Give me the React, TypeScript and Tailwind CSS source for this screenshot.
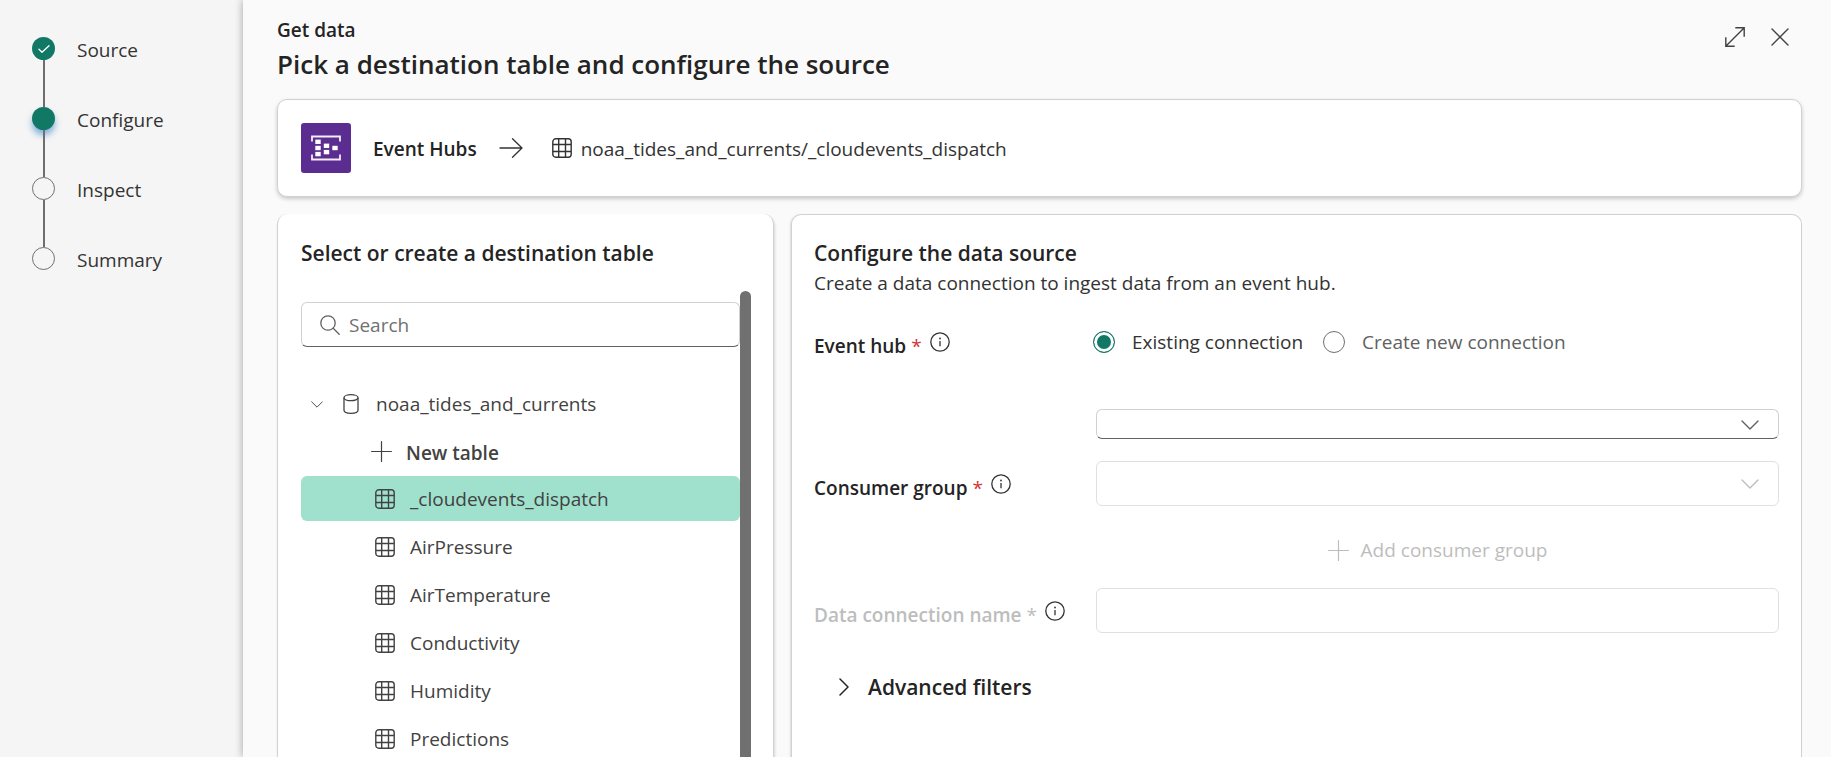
import React from "react";

type IconProps = { className?: string };

const TableIcon = ({ className = "" }: IconProps) => (
  <svg className={"size-5 shrink-0 " + className} viewBox="0 0 20 20" fill="none" stroke="currentColor" strokeWidth="1.4" aria-hidden="true">
    <rect x="0.8" y="0.8" width="18.4" height="18.4" rx="3" />
    <path d="M6.7 1v18M13.5 1v18M1 6.5h18M1 13.5h18" />
  </svg>
);

const InfoIcon = () => (
  <svg className="size-5 shrink-0 text-[#333333]" viewBox="0 0 20 20" fill="none" stroke="currentColor" strokeWidth="1.3" aria-hidden="true">
    <circle cx="10" cy="10" r="9.2" />
    <path d="M10 9v5.2" />
    <circle cx="10" cy="6.5" r="0.9" fill="currentColor" stroke="none" />
  </svg>
);

const PlusIcon = () => (
  <svg className="size-[21px] shrink-0" viewBox="0 0 21 21" fill="none" stroke="currentColor" strokeWidth="1.2" strokeLinecap="round" aria-hidden="true">
    <path d="M10.5 0.6v19.8M0.6 10.5h19.8" />
  </svg>
);

const ChevronDown = ({ className = "" }: IconProps) => (
  <svg className={className} viewBox="0 0 18 10" fill="none" stroke="currentColor" strokeWidth="1.4" strokeLinecap="round" strokeLinejoin="round" aria-hidden="true">
    <path d="M1 1l8 8 8-8" />
  </svg>
);

const EventHubsLogo = () => (
  <svg className="size-[50px] shrink-0" viewBox="0 0 50 50" aria-hidden="true">
    <rect width="50" height="50" rx="3" fill="#5c2d91" />
    <path d="M11 18.5v-5h28v5M11 31.5v5h28v-5" fill="none" stroke="#f3eef8" strokeWidth="1.8" />
    <g fill="#ffffff">
      <rect x="14.3" y="16.6" width="5.4" height="4.4" />
      <rect x="14.3" y="22.8" width="5.4" height="4.4" />
      <rect x="14.3" y="28.9" width="5.4" height="4.4" />
      <rect x="22.8" y="20.6" width="5.4" height="4.4" />
      <rect x="22.8" y="26.9" width="5.4" height="4.4" />
      <rect x="31.3" y="22.8" width="5.4" height="4.4" />
    </g>
  </svg>
);

const steps = [
  { name: "Source", state: "done" },
  { name: "Configure", state: "current" },
  { name: "Inspect", state: "todo" },
  { name: "Summary", state: "todo" },
];

const tables = ["_cloudevents_dispatch", "AirPressure", "AirTemperature", "Conductivity", "Humidity", "Predictions"];

function Marker({ state }: { state: string }) {
  if (state === "done") {
    return (
      <span className="flex size-[23px] items-center justify-center rounded-full bg-[#117865] text-white">
        <svg className="h-2 w-3" viewBox="0 0 12 8" fill="none" stroke="currentColor" strokeWidth="1.3" strokeLinecap="round" strokeLinejoin="round" aria-hidden="true">
          <path d="M1 4.3l3 3L11 0.8" />
        </svg>
      </span>
    );
  }
  if (state === "current") {
    return <span className="size-[23px] rounded-full bg-[#117865] shadow-[0_5px_6px_#0f6cbd80]" />;
  }
  return <span className="size-[23px] rounded-full border border-[#707070]" />;
}

function Steps() {
  return (
    <nav aria-label="Progress" className="w-[243px] shrink-0 bg-[#f5f5f5] px-8 pt-[37px]">
      <ol>
        {steps.map((step, i) => (
          <li key={step.name} className="flex h-[70px] gap-[22px]">
            <div className="flex flex-col items-center">
              <Marker state={step.state} />
              {i < steps.length - 1 && <span className="w-0.5 grow bg-[#6e6e6e]" />}
            </div>
            <span className="leading-[26px] text-[#333333]">{step.name}</span>
          </li>
        ))}
      </ol>
    </nav>
  );
}

function DestinationPanel() {
  return (
    <section className="flex min-h-0 flex-col rounded-t-[10px] border-x border-[#d1d1d1] bg-white pt-6 pr-[22px] pl-[23px] shadow-[1px_2px_3px_#00000024]">
      <h2 className="text-[21px] leading-[30px] font-semibold">Select or create a destination table</h2>
      <div className="mt-[23px] flex min-h-0 grow">
        <div className="min-w-0 grow overflow-hidden pt-[11px]">
          <label className="flex h-[45px] items-center gap-[9px] rounded-md border border-[#d1d1d1] border-b-[#616161] px-[18px] text-[#616161]">
            <svg className="size-5 shrink-0" viewBox="0 0 20 20" fill="none" stroke="currentColor" strokeWidth="1.3" strokeLinecap="round" aria-hidden="true">
              <circle cx="8" cy="8" r="7.2" />
              <path d="M13.2 13.2l6 6" />
            </svg>
            <input type="text" aria-label="Search" placeholder="Search" className="min-w-0 grow bg-transparent outline-none placeholder:text-[#707070]" />
          </label>
          <div className="mt-[34px] text-[#424242]">
            <button type="button" aria-expanded="true" className="flex h-[46px] w-full items-center pl-[10px] text-left">
              <ChevronDown className="h-[7px] w-3" />
              <svg className="ml-5 h-5 w-4" viewBox="0 0 16 20" fill="none" stroke="currentColor" strokeWidth="1.3" aria-hidden="true">
                <ellipse cx="8" cy="3.7" rx="7" ry="3" />
                <path d="M1 3.7v12.6c0 1.7 3.1 3 7 3s7-1.3 7-3V3.7" />
              </svg>
              <span className="ml-[17px]">noaa_tides_and_currents</span>
            </button>
            <button type="button" className="flex h-[49px] w-full items-center gap-3.5 pl-[70px] text-left font-semibold">
              <PlusIcon />
              <span className="pt-0.5">New table</span>
            </button>
            <ul className="flex flex-col gap-[3px]">
              {tables.map((name, i) => (
                <li key={name}>
                  <button
                    type="button"
                    aria-pressed={i === 0}
                    className={
                      "flex h-[45px] w-full items-center gap-[15px] rounded-md pl-[74px] text-left " + (i === 0 ? "bg-[#9fe1cd]" : "bg-white")
                    }
                  >
                    <TableIcon />
                    {name}
                  </button>
                </li>
              ))}
            </ul>
          </div>
        </div>
        <div className="w-[11px] shrink-0 rounded-t-md bg-[#707070]" />
      </div>
    </section>
  );
}

function FieldLabel({ id, text, disabled = false }: { id: string; text: string; disabled?: boolean }) {
  return (
    <div className="flex items-center">
      <label htmlFor={id} className={"pt-2 font-semibold " + (disabled ? "text-[#bdbdbd]" : "")}>
        {text} <span className={"font-normal " + (disabled ? "" : "text-[#d13438]")}>*</span>
      </label>
      <button type="button" aria-label={"About " + text} className="ml-2">
        <InfoIcon />
      </button>
    </div>
  );
}

function SourcePanel() {
  return (
    <section className="min-h-0 overflow-hidden rounded-t-[10px] border border-b-0 border-[#d1d1d1] bg-white pt-[23px] pr-[22px] pl-[22px] shadow-[-1px_1px_2px_#0000001f]">
      <h2 className="text-[21px] leading-[30px] font-semibold">Configure the data source</h2>
      <p className="leading-[30px] text-[#333333]">Create a data connection to ingest data from an event hub.</p>
      <div className="mt-[28px] grid grid-cols-[282px_minmax(0,1fr)]">
        <div className="h-[83px]">
          <div className="flex h-[31px] items-center">
            <FieldLabel id="event-hub" text="Event hub" />
          </div>
        </div>
        <div className="-ml-[3px] flex h-[31px] items-center">
          <label className="flex items-center gap-[17px] text-[#333333]">
            <input
              type="radio"
              name="connection"
              defaultChecked
              className="size-[22px] appearance-none rounded-full border border-[#707070] checked:border-[#117865] checked:bg-[#117865] checked:shadow-[inset_0_0_0_3px_#ffffff]"
            />
            Existing connection
          </label>
          <label className="ml-5 flex items-center gap-[17px] text-[#616161]">
            <input
              type="radio"
              name="connection"
              className="size-[22px] appearance-none rounded-full border border-[#707070] checked:border-[#117865] checked:bg-[#117865] checked:shadow-[inset_0_0_0_3px_#ffffff]"
            />
            Create new connection
          </label>
        </div>

        <div className="relative col-start-2 h-[52px]">
          <select id="event-hub" className="block h-[30px] w-full appearance-none rounded-md border border-[#d1d1d1] border-b-[#616161] bg-white px-4" />
          <ChevronDown className="pointer-events-none absolute top-[11px] right-5 h-[10px] w-[18px] text-[#616161]" />
        </div>

        <FieldLabel id="consumer-group" text="Consumer group" />
        <div className="relative">
          <select id="consumer-group" disabled className="block h-[45px] w-full appearance-none rounded-md border border-[#e0e0e0] bg-white px-4" />
          <ChevronDown className="pointer-events-none absolute top-[18px] right-5 h-[10px] w-[18px] text-[#bdbdbd]" />
        </div>

        <button type="button" disabled className="col-start-2 flex h-[82px] items-center justify-center gap-3 pt-1.5 text-[#bdbdbd]">
          <PlusIcon />
          Add consumer group
        </button>

        <FieldLabel id="connection-name" text="Data connection name" disabled />
        <input id="connection-name" type="text" disabled className="h-[45px] w-full rounded-md border border-[#e0e0e0] bg-white px-4" />
      </div>
      <button type="button" aria-expanded="false" className="mt-[39px] flex items-center gap-[19px] pl-[25px] text-[21px] leading-[30px] font-semibold">
        <svg className="h-[18px] w-[10px]" viewBox="0 0 10 18" fill="none" stroke="currentColor" strokeWidth="1.5" strokeLinecap="round" strokeLinejoin="round" aria-hidden="true">
          <path d="M1 1l8 8-8 8" />
        </svg>
        Advanced filters
      </button>
    </section>
  );
}

export default function App() {
  return (
    <div className="flex h-screen overflow-hidden bg-[#f5f5f5] font-['Open_Sans','Noto_Sans',sans-serif] text-[19px] leading-[26px] text-[#242424]">
      <Steps />
      <main className="flex min-w-0 grow flex-col bg-[#fafafa] pr-[29px] pl-[34px] shadow-[0_0_8px_#00000059]">
        <header className="flex items-start justify-between pt-[17px]">
          <div>
            <p className="leading-[26px] font-semibold">Get data</p>
            <h1 className="text-[26px] leading-[42px] font-semibold">Pick a destination table and configure the source</h1>
          </div>
          <div className="flex gap-[25px] pt-[10px] pr-3 text-[#424242]">
            <button type="button" aria-label="Expand">
              <svg className="size-5" viewBox="0 0 20 20" fill="none" stroke="currentColor" strokeWidth="1.4" aria-hidden="true">
                <path d="M10.3 0.8h8.9v8.9M0.8 10.3v8.9h8.9M19 1L1 19" />
              </svg>
            </button>
            <button type="button" aria-label="Close">
              <svg className="size-5" viewBox="0 0 20 20" fill="none" stroke="currentColor" strokeWidth="1.4" strokeLinecap="round" aria-hidden="true">
                <path d="M2 2l16 16M18 2L2 18" />
              </svg>
            </button>
          </div>
        </header>

        <section className="mt-[14px] flex h-[98px] shrink-0 items-center rounded-[10px] border border-[#d1d1d1] bg-white px-[23px] shadow-[0_2px_4px_#00000033]">
          <EventHubsLogo />
          <span className="ml-[22px] pt-0.5 font-semibold">Event Hubs</span>
          <svg className="ml-[22px] h-[20px] w-6" viewBox="0 0 24 20" fill="none" stroke="#333333" strokeWidth="1.3" strokeLinecap="round" strokeLinejoin="round" aria-hidden="true">
            <path d="M1 10h22M13.5 0.8L23 10l-9.500 9.200" />
          </svg>
          <TableIcon className="ml-[29px] text-[#333333]" />
          <span className="ml-[9px] pt-0.5 text-[#333333]">noaa_tides_and_currents/_cloudevents_dispatch</span>
        </section>

        <div className="mt-[17px] grid min-h-0 grow grid-cols-[minmax(0,497fr)_minmax(0,1011fr)] grid-rows-[minmax(0,1fr)] gap-[17px]">
          <DestinationPanel />
          <SourcePanel />
        </div>
      </main>
    </div>
  );
}
